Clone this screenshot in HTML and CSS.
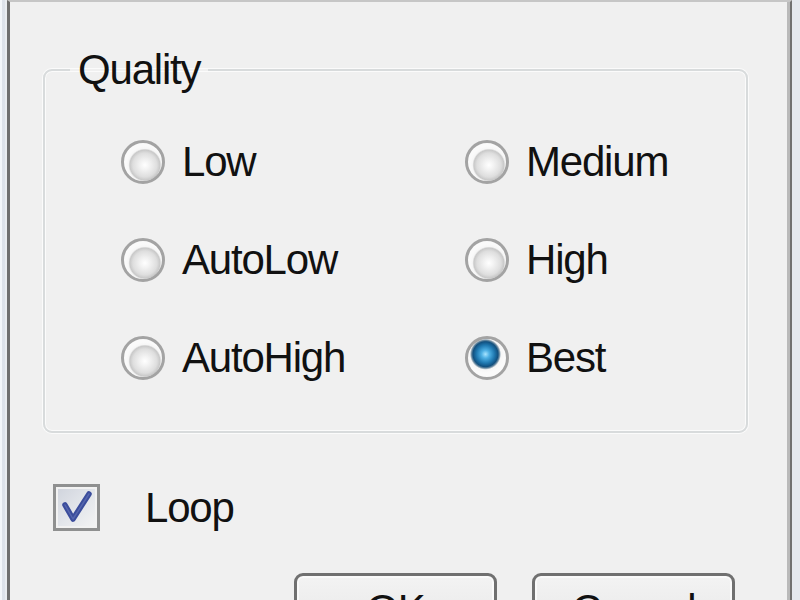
FILE: index.html
```html
<!DOCTYPE html>
<html>
<head>
<meta charset="utf-8">
<link rel="stylesheet" href="styles.css">
</head>
<body>
<div class="frame">
  <div class="dialog">
    <fieldset class="group">
      <legend class="legend">Quality</legend>
      <div class="options">
        <label class="option"><span class="radio"></span><span>Low</span></label>
        <label class="option"><span class="radio"></span><span>Medium</span></label>
        <label class="option"><span class="radio"></span><span>AutoLow</span></label>
        <label class="option"><span class="radio"></span><span>High</span></label>
        <label class="option"><span class="radio"></span><span>AutoHigh</span></label>
        <label class="option"><span class="radio checked"></span><span>Best</span></label>
      </div>
    </fieldset>
    <label class="loop">
      <span class="checkbox">
        <svg width="41" height="41" viewBox="0 0 41 41">
          <path d="M9 18 L17 32 L33 7" fill="none" stroke="#3b4d9c" stroke-width="5.5" stroke-linecap="round" stroke-linejoin="round"/>
          <path d="M9 18 L17 32 L33 7" fill="none" stroke="#7080c0" stroke-width="1.5" stroke-linecap="round" stroke-linejoin="round" opacity="0.5"/>
        </svg>
      </span>
      <span>Loop</span>
    </label>
    <div class="buttons">
      <button class="btn">OK</button>
      <button class="btn">Cancel</button>
    </div>
  </div>
</div>
</body>
</html>
```
FILE: styles.css
```css
html, body {
  margin: 0;
  height: 600px;
  overflow: hidden;
}
body {
  background: linear-gradient(to right, #f3f6fa 0 2px, #dde2ea 2px 5px, #e9ecf0 5px 7px, #e4e8ee 7px);
  font-family: "Liberation Sans", Arial, sans-serif;
  font-size: 42px;
  letter-spacing: -1.2px;
  color: #111;
}
.frame {
  margin-left: 7px;
  width: 785px;
  height: 700px;
  box-sizing: border-box;
  border-left: 3px solid #6f6f6f;
  border-right: 2px solid #707070;
  border-top: 2px solid #c6c6c6;
}
.dialog {
  height: 100%;
  box-sizing: border-box;
  background: #f0f0f0;
  border-right: 3px solid #b9b9b9;
  padding: 48px 39px 0 33px;
}
.group {
  margin: 0;
  padding: 50px 0 51px 0;
  border: 2px solid #d8dbdc;
  border-radius: 9px;
  box-shadow: inset 0 0 0 1px #fbfbfb, 0 0 0 1px #fbfbfb;
}
.legend {
  margin-left: 25px;
  padding: 0 8px;
  line-height: 40px;
}
.options {
  display: grid;
  grid-template-columns: 344px 1fr;
  row-gap: 54px;
  padding-left: 76px;
}
.option {
  display: flex;
  align-items: center;
  gap: 17px;
  height: 44px;
  line-height: 40px;
}
.radio {
  width: 44px;
  height: 44px;
  flex: none;
  box-sizing: border-box;
  border-radius: 50%;
  border: 3px solid #a3a3a3;
  background: radial-gradient(circle at 55% 58%, #ffffff 0, #f2f2f2 5px, #dedede 12px, #c9c9c9 15px, #f6f6f6 16.5px, #fafafa 19px);
}
.radio.checked {
  background: radial-gradient(circle at 46% 40%, #a8e4ff 0, #4eb0e4 4px, #1f78b0 9px, #11507f 12.5px, #6b8aa0 14px, #f6f6f6 15.5px, #fafafa 19px);
}
.loop {
  display: flex;
  align-items: center;
  gap: 45px;
  margin: 51px 0 0 10px;
  line-height: 40px;
}
.checkbox {
  width: 47px;
  height: 47px;
  box-sizing: border-box;
  border: 3px solid #8f9090;
  background: linear-gradient(135deg, #cfd3dc 0%, #e2e5ea 50%, #f4f4f4 100%);
  box-shadow: inset 0 0 0 2px #f2f2f2;
  display: flex;
  align-items: center;
  justify-content: center;
}
.buttons {
  display: flex;
  justify-content: flex-end;
  gap: 35px;
  margin: 42px 13px 0 0;
}
.btn {
  width: 203px;
  height: 92px;
  box-sizing: border-box;
  border: 3px solid #707070;
  border-radius: 9px;
  background: linear-gradient(#f3f3f3, #ebebeb 45%, #dddddd 50%, #cfcfcf);
  box-shadow: inset 0 0 0 2px #fafafa;
  font-family: "Liberation Sans", Arial, sans-serif;
  font-size: 42px;
  letter-spacing: -1.2px;
  color: #111;
  line-height: 40px;
  padding: 14px 0 0;
  display: flex;
  justify-content: center;
  align-items: flex-start;
}
```
